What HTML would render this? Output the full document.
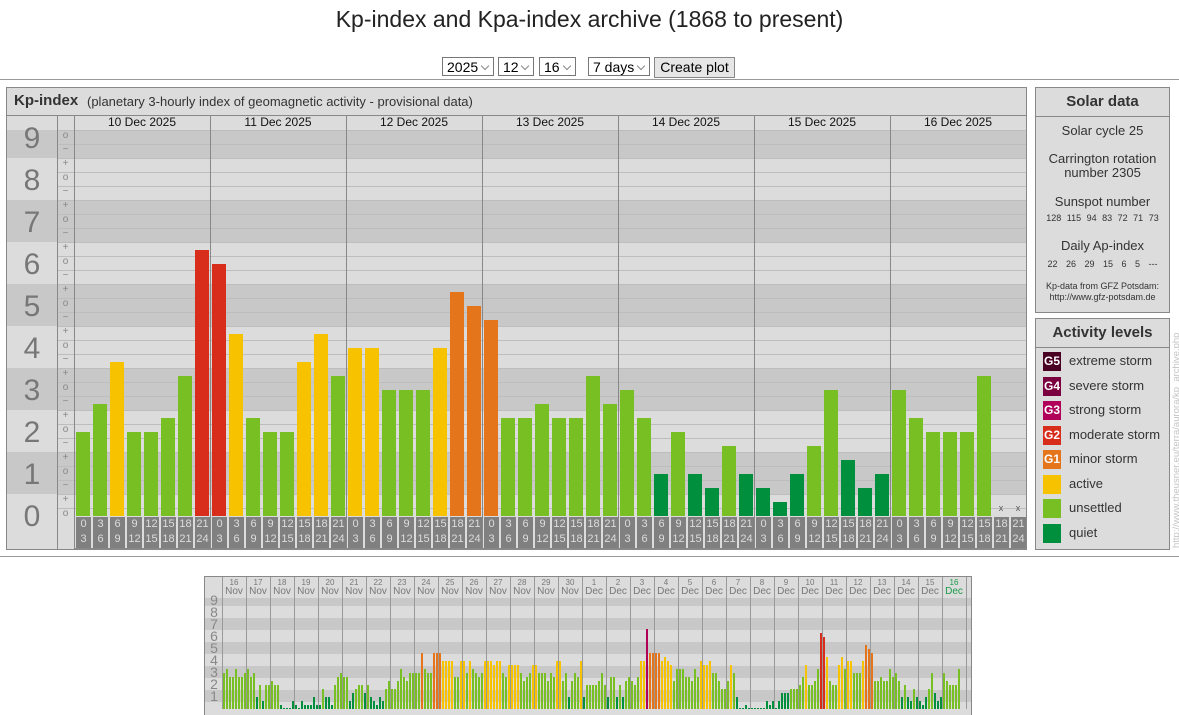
<!DOCTYPE html>
<html><head><meta charset="utf-8">
<style>
body{margin:0;background:#fff;font-family:"Liberation Sans",Arial,sans-serif;width:1179px;height:715px;overflow:hidden;position:relative}
.a{position:absolute}
h1{position:absolute;top:6px;left:0;width:1179px;text-align:center;font-weight:normal;font-size:23px;margin:0;color:#222}
.sel{position:absolute;top:57px;height:19px;border:1px solid #777;background:#fff;font-size:14px;line-height:19px;padding-left:4px;box-sizing:border-box;color:#000}
.sel:after{content:"";position:absolute;right:5px;top:5px;width:5px;height:5px;border-right:1px solid #888;border-bottom:1px solid #888;transform:rotate(45deg)}
.btn{position:absolute;top:57px;left:654px;width:81px;height:21px;border:1px solid #888;background:#e6e6e6;font-size:14px;text-align:center;line-height:19px;box-sizing:border-box}
.box{position:absolute;border:1px solid #888;background:#dcdcdc;box-sizing:border-box}
.hr{position:absolute;left:0;width:1179px;height:1px;background:#999}
</style></head><body>
<h1>Kp-index and Kpa-index archive (1868 to present)</h1>
<div class="sel" style="left:442px;width:52px">2025</div>
<div class="sel" style="left:498px;width:36px">12</div>
<div class="sel" style="left:539px;width:37px">16</div>
<div class="sel" style="left:588px;width:62px">7 days</div>
<div class="btn">Create plot</div>
<div class="hr" style="top:79px"></div>
<div class="hr" style="top:556px"></div>

<div class="box" style="left:6px;top:87px;width:1021px;height:463px"></div>
<div class="a" style="left:7px;top:115px;width:1019px;height:1px;background:#888"></div>
<div class="a" style="left:14px;top:92px;font-size:15px;font-weight:bold;color:#333">Kp-index</div>
<div class="a" style="left:87px;top:94px;font-size:13px;color:#333">(planetary 3-hourly index of geomagnetic activity - provisional data)</div>
<div id="main"></div>

<div class="box" style="left:1035px;top:87px;width:135px;height:226px;text-align:center;color:#333"></div>
<div class="a" style="left:1035px;top:87px;width:135px;height:29px;border-bottom:1px solid #888;text-align:center;font-weight:bold;font-size:15px;line-height:29px;color:#333">Solar data</div>
<div class="a" style="left:1035px;top:123px;width:135px;text-align:center;font-size:13px;color:#333">Solar cycle 25</div>
<div class="a" style="left:1035px;top:152px;width:135px;text-align:center;font-size:13px;line-height:14px;color:#333">Carrington rotation<br>number 2305</div>
<div class="a" style="left:1035px;top:194px;width:135px;text-align:center;font-size:13px;color:#333">Sunspot number</div>
<div class="a" style="left:1035px;top:213px;width:135px;text-align:center;font-size:9px;color:#333;word-spacing:3px">128 115 94 83 72 71 73</div>
<div class="a" style="left:1035px;top:238px;width:135px;text-align:center;font-size:13px;color:#333">Daily Ap-index</div>
<div class="a" style="left:1035px;top:259px;width:135px;text-align:center;font-size:9px;color:#333;word-spacing:6px">22 26 29 15 6 5 ---</div>
<div class="a" style="left:1035px;top:281px;width:135px;text-align:center;font-size:9px;line-height:11px;color:#333">Kp-data from GFZ Potsdam:<br>http://www.gfz-potsdam.de</div>

<div class="box" style="left:1035px;top:318px;width:135px;height:232px"></div>
<div class="a" style="left:1035px;top:318px;width:135px;height:29px;border-bottom:1px solid #888;text-align:center;font-weight:bold;font-size:15px;line-height:29px;color:#333">Activity levels</div>
<div id="leg"></div>
<div class="a" style="left:1171px;top:548px;transform-origin:0 0;transform:rotate(-90deg);font-size:9.5px;color:#c4c4c4;white-space:nowrap">http://www.theusner.eu/terra/aurora/kp_archive.php</div>

<div class="a" style="left:204px;top:576px;width:768px;height:139px;border:1px solid #888;border-bottom:none;box-sizing:border-box;background:#dcdcdc"></div>
<div id="mini"></div>

<script>
function el(p,s,t){var d=document.createElement('div');d.className='a';d.style.cssText=s;if(t!=null)d.innerHTML=t;document.getElementById(p).appendChild(d);}
function col(t){if(t>=23)return'#7a0040';if(t>=20)return'#b0005a';if(t>=17)return'#d92d1c';if(t>=14)return'#e5751b';if(t>=11)return'#f7c200';if(t>=5)return'#77bf22';return'#008f3d';}
(function(){
var n,t,d,i,x,x0,v,yt,yb,c;
el('main','left:7px;top:516px;width:1019px;height:33px;background:#dcdcdc');
for(n=0;n<=9;n++){yt=Math.max(130,494-42*n);yb=n==0?516:536-42*n;
 c=n%2?'#c8c8c8':'#dcdcdc';
 el('main','left:7px;top:'+yt+'px;width:1019px;height:'+(yb-yt)+'px;background:'+c);}
for(n=0;n<=9;n++){el('main','left:7px;top:'+(515-42*n-15)+'px;width:50px;text-align:center;font-size:30px;line-height:34px;color:#777',n);}
el('main','left:74px;top:116px;width:952px;height:14px;background:#dcdcdc');
for(t=1;t<=27;t++){el('main','left:57px;top:'+(522-14*t)+'px;width:969px;height:1px;background:#bdbdbd');}
el('main','left:57px;top:116px;width:17px;height:14px;background:#dcdcdc');
el('main','left:57px;top:130px;width:969px;height:1px;background:#bdbdbd');
for(t=0;t<=27;t++){el('main','left:57px;top:'+(508-14*t)+'px;width:17px;text-align:center;font-size:10px;color:#888',['o','+','&minus;'][t%3]);}
el('main','left:57px;top:116px;width:1px;height:433px;background:#888');
el('main','left:74px;top:116px;width:1px;height:433px;background:#888');
var days=['10','11','12','13','14','15','16'];
var data=[[6,8,11,6,6,7,10,19],[18,13,7,6,6,11,13,10],[12,12,9,9,9,12,16,15],[14,7,7,8,7,7,10,8],[9,7,3,6,3,2,5,3],[2,1,3,5,9,4,2,3],[9,7,6,6,6,10,-1,-1]];
var hrs=[0,3,6,9,12,15,18,21];
for(d=0;d<7;d++){x0=74+136*d;
 if(d>0)el('main','left:'+x0+'px;top:116px;width:1px;height:433px;background:#888');
 el('main','left:'+x0+'px;top:115px;width:136px;text-align:center;font-size:12px;color:#111',days[d]+' Dec 2025');
 for(i=0;i<8;i++){x=x0+2+17*i;v=data[d][i];
  if(v>=0)el('main','left:'+x+'px;top:'+(516-14*v)+'px;width:14px;height:'+(14*v)+'px;background:'+col(v));
  else el('main','left:'+x+'px;top:503px;width:14px;text-align:center;font-size:9px;color:#555','x');
  el('main','left:'+x+'px;top:517px;width:15px;height:31px;background:#808080;color:#ddd;font-size:11px;line-height:15px;text-align:center',hrs[i]+'<br>'+(hrs[i]+3));
 }}
el('main','left:74px;top:548px;width:952px;height:1px;background:#888');
var lg=[['#4a0022','G5','extreme storm'],['#7a0040','G4','severe storm'],['#b0005a','G3','strong storm'],['#d92d1c','G2','moderate storm'],['#e5751b','G1','minor storm'],['#f7c200','','active'],['#77bf22','','unsettled'],['#008f3d','','quiet']];
for(i=0;i<8;i++){var y=352+24.5*i;
 el('leg','left:1043px;top:'+y+'px;width:18px;height:19px;background:'+lg[i][0]+';color:#fff;font-weight:bold;font-size:12px;line-height:19px;text-align:center',lg[i][1]);
 el('leg','left:1069px;top:'+(y+1)+'px;font-size:13px;color:#333',lg[i][2]);}
for(n=0;n<=9;n++){yt=Math.max(598,702-12*n);yb=Math.min(714,714-12*n);
 el('mini','left:205px;top:'+yt+'px;width:766px;height:'+(yb-yt)+'px;background:'+(n%2?'#c8c8c8':'#dcdcdc'));}
el('mini','left:205px;top:577px;width:766px;height:21px;background:#dcdcdc');
for(n=1;n<=9;n++){el('mini','left:206px;top:'+(700-12*n)+'px;width:16px;text-align:center;font-size:14px;color:#888;line-height:16px',n);}
var md=[[9,10,8,8,10,8,8,9],[10,8,9,3,6,2,6,6],[7,6,6,1,0,0,0,2],[1,0,2,1,1,1,3,1],[1,5,3,3,1,6,8,9],[8,8,2,4,5,6,6,4],[6,3,2,1,3,2,5,7],[5,5,7,10,8,7,9,9],[9,9,14,10,9,9,14,14],[14,12,12,12,12,8,8,12],[12,9,12,10,9,8,9,12],[12,12,11,12,12,9,8,11],[11,11,11,9,7,8,9,11],[11,9,9,9,7,9,8,12],[12,7,9,3,7,9,8,12],[3,6,6,6,6,7,9,6],[3,8,8,3,6,3,7,8],[7,6,8,12,12,20,14,14],[14,14,12,13,12,11,7,10],[10,10,8,8,7,10,8,12],[11,11,12,9,9,7,5,5],[7,11,9,3,0,0,1,0],[0,0,0,0,0,2,1,2],[0,2,4,4,4,5,5,5]].concat(data);
var lbl=[];for(i=16;i<=30;i++)lbl.push([i,'Nov']);for(i=1;i<=16;i++)lbl.push([i,'Dec']);
for(d=0;d<31;d++){x0=222+24*d;
 el('mini','left:'+x0+'px;top:577px;width:1px;height:133px;background:#999');
 c=d==30?'#1a9a4a':'#777';
 el('mini','left:'+x0+'px;top:579px;width:24px;text-align:center;font-size:8px;line-height:8px;color:'+c,lbl[d][0]);
 el('mini','left:'+x0+'px;top:587px;width:24px;text-align:center;font-size:10px;line-height:10px;color:'+c,lbl[d][1]);
 for(i=0;i<8;i++){v=md[d][i];if(v<0)continue;var h=Math.max(1,4*v);
  el('mini','left:'+(x0+1+3*i)+'px;top:'+(709-h)+'px;width:2px;height:'+h+'px;background:'+col(v));}}
el('mini','left:966px;top:577px;width:1px;height:133px;background:#999');
el('mini','left:205px;top:709px;width:766px;height:6px;background:#dcdcdc');
})();
</script>
</body></html>
